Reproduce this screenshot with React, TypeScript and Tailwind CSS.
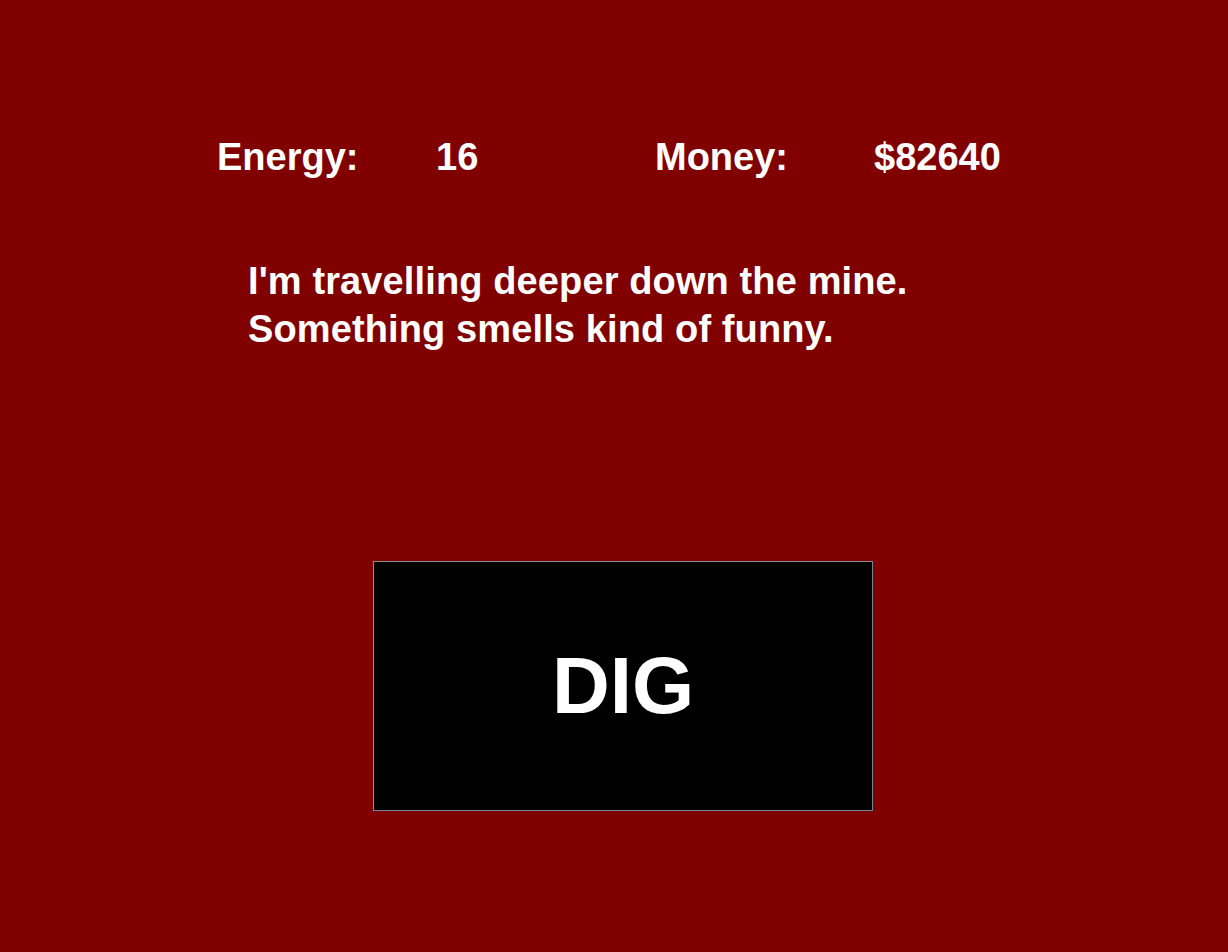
export default function App() {
    const stats = [
        { label: "Energy:", value: "16" },
        { label: "Money:", value: "$82640" },
    ];

    return (
        <div className="w-full min-h-[952px] bg-[#800000] text-white font-['Liberation_Sans',Arial,sans-serif] font-bold flex flex-col">
            <div className="mt-[138px] ml-[217px] grid grid-cols-[repeat(4,219px)] text-[38px] leading-[38px] h-[38px]">
                {stats.map((s) => (
                    <>
                        <div key={s.label}>{s.label}</div>
                        <div key={s.value}>{s.value}</div>
                    </>
                ))}
            </div>

            <div className="mt-[81px] ml-[248px] text-[38px] leading-[48px] tracking-[0.12px]">
                <p>I'm travelling deeper down the mine.</p>
                <p>Something smells kind of funny.</p>
            </div>

            <button className="mt-[208px] ml-[373px] w-[500px] h-[250px] bg-black border border-t-[#8a8f96] border-l-[#8a8f96] border-r-[#6f8699] border-b-[#6f8699] flex items-center justify-center text-[80px] font-bold text-white">
                DIG
            </button>
        </div>
    );
}
